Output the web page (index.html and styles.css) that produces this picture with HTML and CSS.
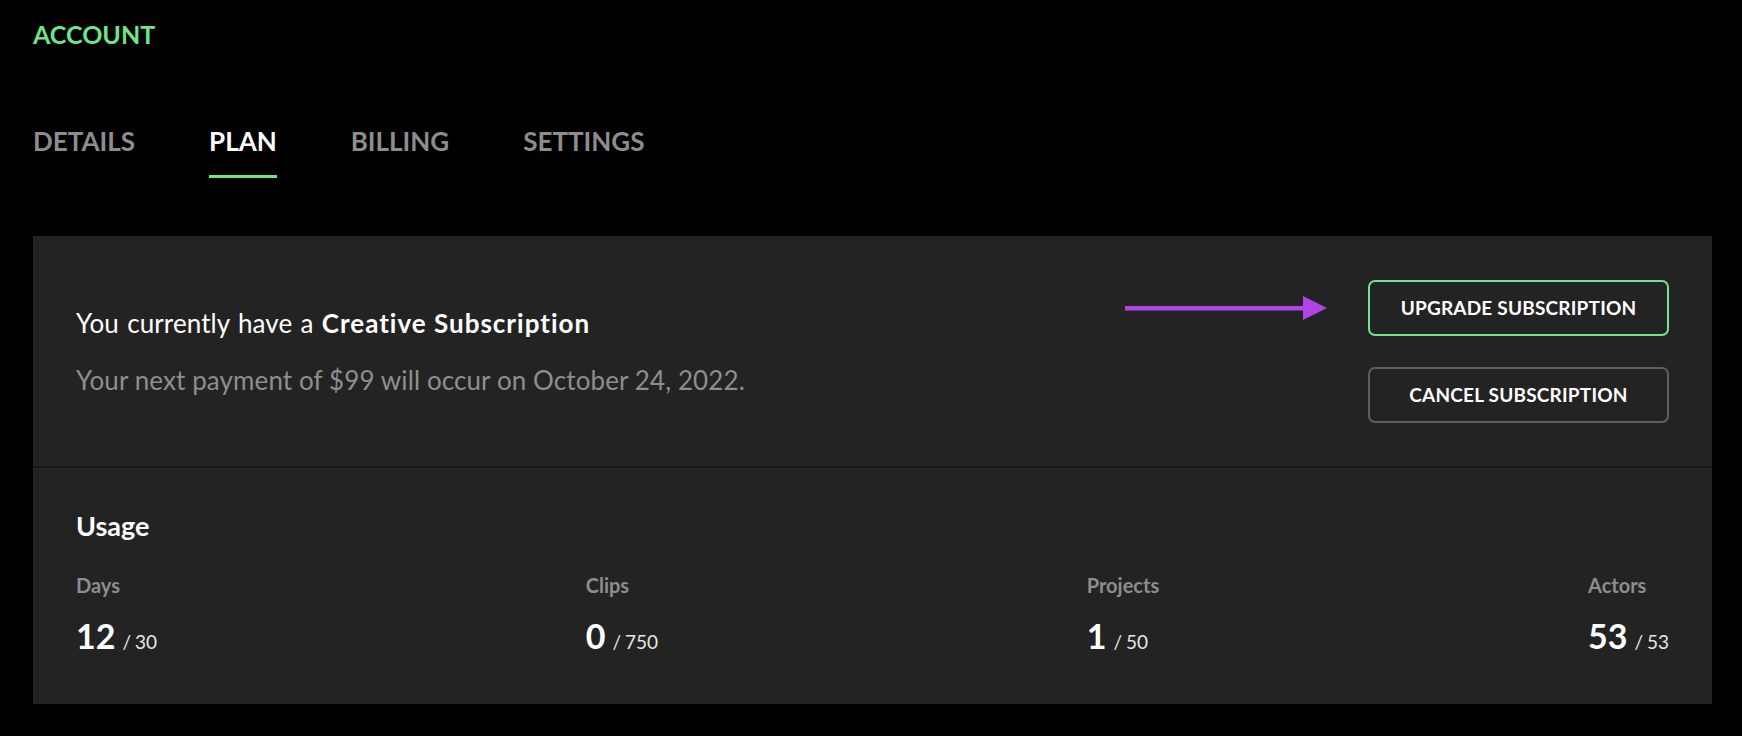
FILE: index.html
```html
<!DOCTYPE html>
<html lang="en">
<head>
<meta charset="utf-8">
<title>Account – Plan</title>
<link rel="stylesheet" href="styles.css">
</head>
<body>
<div class="page">
  <h1 class="title">ACCOUNT</h1>
  <nav class="tabs">
    <a class="tab">DETAILS</a>
    <a class="tab active">PLAN</a>
    <a class="tab">BILLING</a>
    <a class="tab">SETTINGS</a>
  </nav>
  <section class="card">
    <div class="plan">
      <div class="plan-text">
        <p class="plan-line">You currently have a <strong>Creative Subscription</strong></p>
        <p class="plan-sub">Your next payment of $99 will occur on October 24, 2022.</p>
      </div>
      <div class="plan-actions">
        <div class="upgrade-row">
          <svg class="arrow" width="202" height="24" viewBox="0 0 202 24" aria-hidden="true">
            <rect x="0" y="10" width="180" height="4.5" fill="#b044e4"/>
            <polygon points="178,0 202,12 178,24" fill="#b044e4"/>
          </svg>
          <button class="btn btn-upgrade">UPGRADE SUBSCRIPTION</button>
        </div>
        <button class="btn btn-cancel">CANCEL SUBSCRIPTION</button>
      </div>
    </div>
    <div class="usage">
      <h2 class="usage-title">Usage</h2>
      <div class="stats">
        <div class="stat">
          <div class="stat-label">Days</div>
          <div class="stat-value"><span class="num">12</span><span class="max">/ 30</span></div>
        </div>
        <div class="stat">
          <div class="stat-label">Clips</div>
          <div class="stat-value"><span class="num">0</span><span class="max">/ 750</span></div>
        </div>
        <div class="stat">
          <div class="stat-label">Projects</div>
          <div class="stat-value"><span class="num">1</span><span class="max">/ 50</span></div>
        </div>
        <div class="stat">
          <div class="stat-label">Actors</div>
          <div class="stat-value"><span class="num">53</span><span class="max">/ 53</span></div>
        </div>
      </div>
    </div>
  </section>
</div>
</body>
</html>
```

FILE: styles.css
```css
* { box-sizing: border-box; }

html, body {
  margin: 0;
  padding: 0;
  background: #000;
}

body {
  font-family: Lato, "Open Sans", sans-serif;
  color: #fff;
}

.page {
  padding: 19px 30px 0 33px;
}

.title {
  margin: 0;
  font-size: 25px;
  line-height: 31px;
  font-weight: 700;
  color: #6fe48a;
}

.tabs {
  display: flex;
  gap: 74px;
  margin-top: 76px;
}

.tab {
  display: block;
  font-size: 26px;
  line-height: 31px;
  font-weight: 700;
  color: #8d8d8d;
  padding-bottom: 18px;
  border-bottom: 3px solid transparent;
}

.tab.active {
  color: #fff;
  border-bottom-color: #6fe48a;
}

.card {
  margin-top: 58px;
  background: #232323;
}

.plan {
  height: 232px;
  padding: 0 43px;
  display: flex;
  align-items: center;
  justify-content: space-between;
  border-bottom: 2px solid #171717;
}

.plan-text p {
  margin: 0;
  font-size: 26px;
  line-height: 32px;
  letter-spacing: 0.1px;
}

.plan-line {
  word-spacing: 1.5px;
}

.plan-line strong {
  font-weight: 700;
  letter-spacing: 1px;
  word-spacing: 0;
}

.plan-sub {
  margin-top: 25px !important;
  color: #8e8e8e;
}

.plan-actions {
  display: flex;
  flex-direction: column;
  align-items: flex-end;
  gap: 31px;
}

.upgrade-row {
  display: flex;
  align-items: center;
  gap: 41px;
}

.arrow { display: block; }

.btn {
  width: 301px;
  height: 56px;
  background: transparent;
  border-radius: 7px;
  font-family: Lato, "Open Sans", sans-serif;
  font-size: 19px;
  font-weight: 700;
  color: #fff;
  letter-spacing: 0.2px;
  padding: 0;
}

.btn-upgrade { border: 2px solid #6fe48a; }
.btn-cancel { border: 2px solid #5f5f5f; }

.usage {
  padding: 42px 43px 0 43px;
  height: 236px;
}

.usage-title {
  margin: 0;
  font-size: 27px;
  line-height: 32px;
  font-weight: 700;
}

.stats {
  display: flex;
  justify-content: space-between;
  margin-top: 31px;
}

.stat-label {
  font-size: 20px;
  line-height: 24px;
  font-weight: 700;
  color: #8d8d8d;
}

.stat-value {
  margin-top: 19px;
  line-height: 40px;
}

.num {
  font-size: 34px;
  font-weight: 700;
}

.max {
  font-size: 19px;
  color: #e6e6e6;
  margin-left: 7px;
  word-spacing: -1px;
}
```
